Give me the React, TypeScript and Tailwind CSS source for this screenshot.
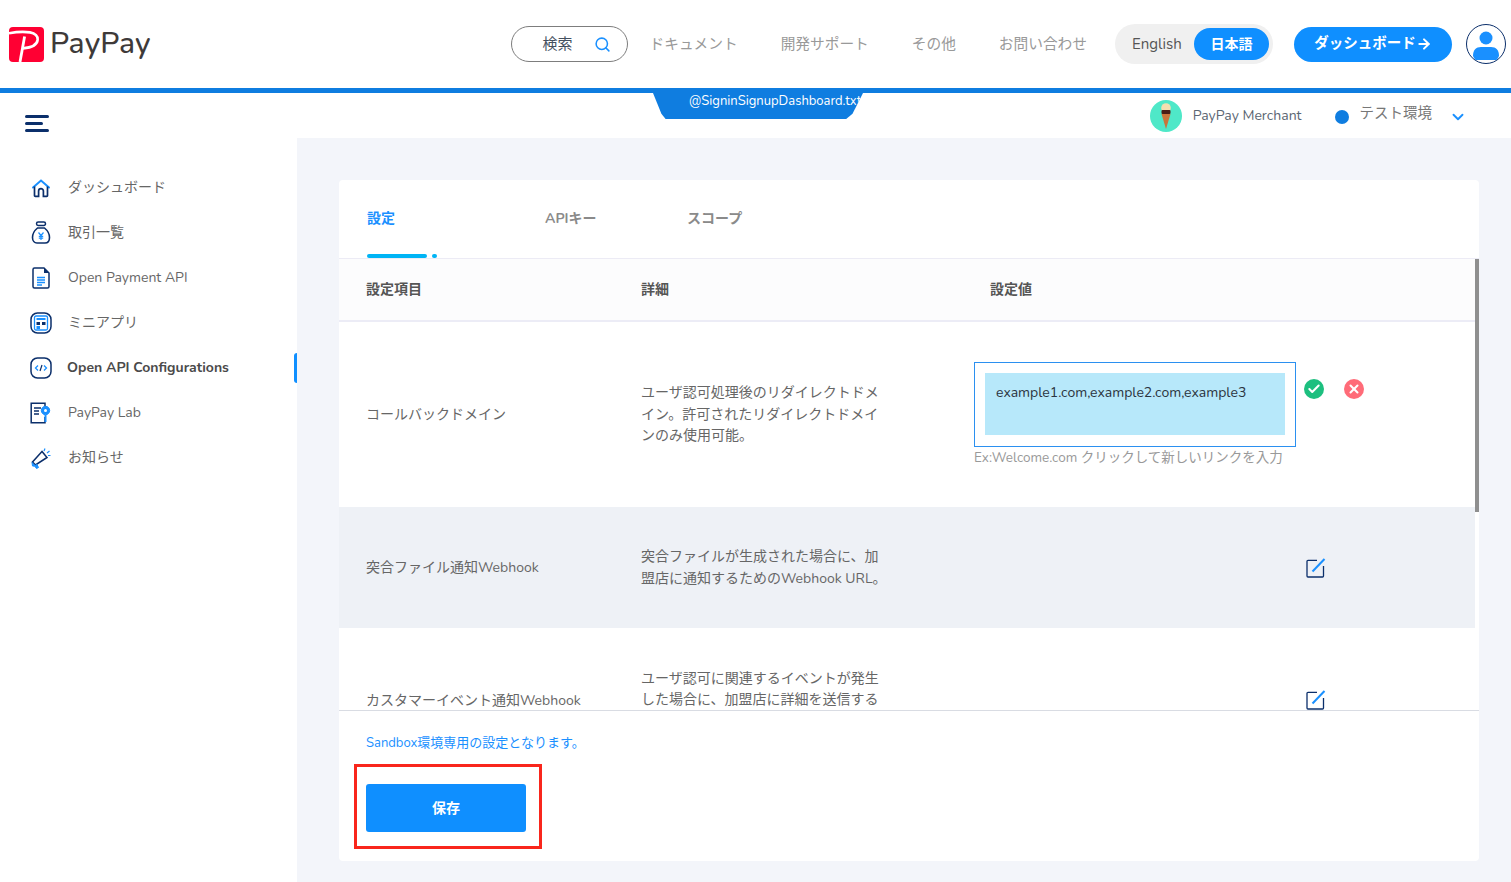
import { Search, ArrowRight, ChevronDown, Check, X } from "lucide-react";
import type { ReactNode } from "react";

const NAVY = "#0b2f6b";
const BLUE = "#1a90ff";

function Logo() {
  return (
    <svg width="35" height="35" viewBox="0 0 35 35">
      <rect width="35" height="35" rx="4" fill="#ff0033" />
      <path d="M0 6.2C9 4.6 16 4.6 21 5.4C26.5 6.3 29 9.5 28.6 13C28.2 17 24 20.4 14 21.4" fill="none" stroke="#fff" strokeWidth="2.6" />
      <path d="M15.6 9.4L11 35" fill="none" stroke="#fff" strokeWidth="2.8" />
    </svg>
  );
}

function HomeIcon() {
  return (
    <svg width="20" height="20" viewBox="0 0 20 20" fill="none">
      <path d="M2 9.5L10 2.5L18 9.5" stroke={BLUE} strokeWidth="2" strokeLinecap="round" />
      <path d="M3.5 8.5V17.5a.8.8 0 00.8.8H7.6V13a2.4 2.4 0 014.8 0v5.3h3.3a.8.8 0 00.8-.8V8.5" stroke={NAVY} strokeWidth="1.7" />
    </svg>
  );
}

function MoneyIcon() {
  return (
    <svg width="20" height="24" viewBox="0 0 20 24" fill="none">
      <rect x="5.5" y="1" width="9" height="3.4" rx="1.7" stroke={NAVY} strokeWidth="1.5" />
      <path d="M6.5 7h7c3 2.5 5 6 5 9.500 0 3.500-2 5.500-4.500 5.500h-8C3.500 22 1.500 20 1.500 16.500 1.500 13 3.500 9.500 6.500 7z" stroke={NAVY} strokeWidth="1.6" />
      <path d="M7.500 11.500L10 14.500L12.500 11.500M10 14.500V19M7.800 15.300H12.200M7.800 17.200H12.200" stroke={BLUE} strokeWidth="1.200" />
    </svg>
  );
}

function DocIcon() {
  return (
    <svg width="18" height="22" viewBox="0 0 18 22" fill="none">
      <path d="M12 1H2.500A1.500 1.500 0 001 2.500v17A1.500 1.500 0 002.500 21h13a1.500 1.500 0 001.500-1.500V6z" stroke={NAVY} strokeWidth="1.500" />
      <path d="M12 1v5h5" fill={NAVY} />
      <path d="M5 10.500h8M5 13h8M5 15.500h8M5 18h5" stroke={BLUE} strokeWidth="1.300" />
    </svg>
  );
}

function MiniAppIcon() {
  return (
    <svg width="22" height="22" viewBox="0 0 22 22" fill="none">
      <rect x="1" y="1" width="20" height="20" rx="6.500" stroke={NAVY} strokeWidth="1.500" />
      <rect x="4.500" y="4" width="13" height="14" rx="1.500" stroke={BLUE} strokeWidth="1.300" />
      <rect x="6.500" y="6" width="9" height="2" fill={BLUE} />
      <rect x="6.500" y="10" width="3.500" height="3" fill={NAVY} />
      <rect x="12" y="10" width="3.500" height="3" fill={NAVY} />
      <rect x="6.500" y="14" width="3.500" height="3" fill={BLUE} />
    </svg>
  );
}

function CodeIcon() {
  return (
    <svg width="22" height="22" viewBox="0 0 22 22" fill="none">
      <rect x="1" y="1" width="20" height="20" rx="6.500" stroke={NAVY} strokeWidth="1.500" />
      <path d="M8 8.500L5.500 11L8 13.500M14 8.500L16.500 11L14 13.500" stroke={BLUE} strokeWidth="1.300" />
      <path d="M12 8L10 14" stroke={NAVY} strokeWidth="1.200" />
    </svg>
  );
}

function LabIcon() {
  return (
    <svg width="22" height="22" viewBox="0 0 22 22" fill="none">
      <path d="M15 6V1.200H1.200V20.800H15V15" stroke={NAVY} strokeWidth="1.500" />
      <path d="M4 6h7M4 9h5M4 12h5" stroke={NAVY} strokeWidth="1.300" />
      <circle cx="15.500" cy="8.500" r="4.200" fill={BLUE} stroke={BLUE} />
      <circle cx="15.500" cy="8.500" r="1.500" fill="#fff" />
      <path d="M15.500 13v7" stroke={BLUE} strokeWidth="2" />
    </svg>
  );
}

function MegaphoneIcon() {
  return (
    <svg width="20" height="22" viewBox="0 0 20 22" fill="none">
      <path d="M11 4.500L1.500 15L4.500 18L16 10.500z" stroke={NAVY} strokeWidth="1.500" />
      <path d="M1 15.500L4 18.500L6 17.500L7.500 20.500L5.500 21.500L3.800 19.200L1.500 19z" fill={BLUE} stroke={BLUE} />
      <path d="M13 4L14 1.500M16 6L18.500 4M17 8.500L19.500 8.500" stroke={BLUE} strokeWidth="1.200" />
    </svg>
  );
}

function EditIcon() {
  return (
    <svg width="20" height="20" viewBox="0 0 20 20" fill="none" className="shrink-0">
      <path d="M11 2.300H2a1 1 0 00-1 1v14.700a1 1 0 001 1h14.500a1 1 0 001-1V8" stroke={NAVY} strokeWidth="1.300" />
      <path d="M6.500 13.500L18.500 1" stroke={BLUE} strokeWidth="2" />
    </svg>
  );
}

function ProfileIcon() {
  return (
    <div className="w-10 h-10 rounded-full border border-[#0b2f6b] flex items-center justify-center">
      <svg width="30" height="32" viewBox="0 0 30 32">
        <circle cx="15" cy="10" r="6.500" fill={BLUE} />
        <path d="M2 28c0-6 3-9 8-9h10c5 0 8 3 8 9a14 14 0 01-26 0z" fill={BLUE} />
      </svg>
    </div>
  );
}

function IceCream() {
  return (
    <div className="w-8 h-8 rounded-full bg-[#4fe8c8] flex items-center justify-center">
      <svg width="12" height="28" viewBox="0 0 12 28">
        <circle cx="6" cy="6" r="4.800" fill="#f5dfb0" />
        <rect x="1.500" y="8" width="9" height="4" rx="1" fill="#4a1d16" />
        <path d="M1.500 12h9L6 27z" fill="#c9743a" />
      </svg>
    </div>
  );
}

type NavItem = { icon: ReactNode; label: string; active?: boolean };

const navItems: NavItem[] = [
  { icon: <HomeIcon />, label: "ダッシュボード" },
  { icon: <MoneyIcon />, label: "取引一覧" },
  { icon: <DocIcon />, label: "Open Payment API" },
  { icon: <MiniAppIcon />, label: "ミニアプリ" },
  { icon: <CodeIcon />, label: "Open API Configurations", active: true },
  { icon: <LabIcon />, label: "PayPay Lab" },
  { icon: <MegaphoneIcon />, label: "お知らせ" },
];

function Header() {
  return (
    <header className="h-[88px] shrink-0 bg-white flex items-center pl-[9px] pr-[5px]">
      <div className="flex items-center gap-[6px]">
        <Logo />
        <span className="text-[30px] font-medium text-[#3e3a39] leading-none tracking-[0.2px]">PayPay</span>
      </div>
      <div className="ml-auto flex items-center">
        <div className="w-[117px] h-[36px] rounded-full border border-[#7d7d7d] flex items-center pl-[31px] text-[15px] text-[#44505f]">
          検索
          <Search size={17} color={BLUE} strokeWidth={2.2} className="ml-[21px]" />
        </div>
        <nav className="flex items-center gap-[43px] ml-[22px] text-[14.700px] text-[#999999]">
          <span>ドキュメント</span>
          <span>開発サポート</span>
          <span>その他</span>
          <span>お問い合わせ</span>
        </nav>
        <div className="ml-[28px] w-[158px] h-10 rounded-full bg-[#f0f0f0] flex items-center pl-[17px] pr-[4px] justify-between text-[15px] text-[#555555]">
          <span>English</span>
          <span className="w-[75px] h-8 rounded-full bg-[#0f8fff] text-white font-bold text-[14px] flex items-center justify-center">日本語</span>
        </div>
        <button className="ml-[21px] w-[158px] h-[35px] rounded-full bg-[#0f8fff] text-white font-bold text-[14.500px] flex items-center justify-center">
          ダッシュボード
          <ArrowRight size={16} strokeWidth={3} />
        </button>
        <div className="ml-[14px]">
          <ProfileIcon />
        </div>
      </div>
    </header>
  );
}

function Sidebar() {
  return (
    <aside className="w-[297px] shrink-0 bg-white">
      <div className="h-[72px] pl-[25px] pt-[22px]">
        <div className="w-6 flex flex-col gap-[4px]">
          <div className="h-[3px] w-6 rounded-full bg-[#0b2f6b]" />
          <div className="h-[3px] w-[18px] rounded-full bg-[#0b2f6b]" />
          <div className="h-[3px] w-6 rounded-full bg-[#0b2f6b]" />
        </div>
      </div>
      <ul>
        {navItems.map((item) => (
          <li key={item.label} className="relative h-[45px] flex items-center text-[14px] text-[#666666]">
            <span className="w-[28px] ml-[27px] flex justify-center">{item.icon}</span>
            <span className={item.active ? "ml-[12px] font-bold text-[#4a4a4a]" : "ml-[13px]"}>{item.label}</span>
            {item.active && <div className="absolute right-0 top-[8px] w-[3px] h-[30px] rounded-l-sm bg-[#0f8fff]" />}
          </li>
        ))}
      </ul>
    </aside>
  );
}

function SettingsTable() {
  return (
    <div className="relative h-[451px] overflow-hidden">
      <div className="h-[63px] bg-[#fcfcfd] border-b-2 border-[#ececf6] flex items-center pl-[27px] text-[14px] font-bold text-[#555555]">
        <span className="w-[275px]">設定項目</span>
        <span className="w-[349px]">詳細</span>
        <span>設定値</span>
      </div>

      <div className="mr-[4px] text-[14px] text-[#666666]">
        <div className="h-[185px] flex items-center pl-[27px]">
          <span className="w-[275px]">コールバックドメイン</span>
          <p className="w-[333px] leading-[21.500px]">
            ユーザ認可処理後のリダイレクトドメ<br />
            イン。許可されたリダイレクトドメイ<br />
            ンのみ使用可能。
          </p>
          <div className="mt-[1px]">
            <div className="flex items-start">
              <div className="w-[322px] h-[85px] border border-[#2b90f0] p-[10px]">
                <div className="h-[62px] bg-[#b7e8fa] px-[11px] pt-[10px] text-[14px] leading-[20px] text-[#2b3440]">
                  example1.com,example2.com,example3
                </div>
              </div>
              <div className="ml-[8px] mt-[17px] w-5 h-5 rounded-full bg-[#1dbf7f] flex items-center justify-center">
                <Check size={14} color="#fff" strokeWidth={3.500} />
              </div>
              <div className="ml-[20px] mt-[17px] w-5 h-5 rounded-full bg-[#ff6b78] flex items-center justify-center">
                <X size={14} color="#fff" strokeWidth={3.500} />
              </div>
            </div>
            <div className="mt-[1px] text-[13.500px] leading-[20px] text-[#999999]">Ex:Welcome.com クリックして新しいリンクを入力</div>
          </div>
        </div>

        <div className="h-[121px] bg-[#eef1f6] flex items-center pl-[27px]">
          <span className="w-[275px]">突合ファイル通知Webhook</span>
          <p className="w-[333px] leading-[21.500px]">
            突合ファイルが生成された場合に、加<br />
            盟店に通知するためのWebhook URL。
          </p>
          <div className="w-[352px] flex justify-end">
            <EditIcon />
          </div>
        </div>

        <div className="h-[144px] flex items-center pl-[27px]">
          <span className="w-[275px]">カスタマーイベント通知Webhook</span>
          <p className="w-[333px] leading-[21.500px]">
            ユーザ認可に関連するイベントが発生<br />
            した場合に、加盟店に詳細を送信する<br />
            ためのWebhook URL。
          </p>
          <div className="w-[352px] flex justify-end">
            <EditIcon />
          </div>
        </div>
      </div>

      <div className="absolute right-0 top-0 w-[4px] h-[253px] bg-[#8f8f8f]" />
    </div>
  );
}

function SettingsCard() {
  return (
    <section className="bg-white rounded-[4px] h-[681px] flex flex-col">
      <div className="h-[79px] border-b border-[#ecebf5] flex pl-[28px] pt-[28px] text-[14px] font-bold text-[#8a8a8a] relative">
        <span className="w-[178px] text-[#1a90ff]">設定</span>
        <span className="w-[142px]">APIキー</span>
        <span>スコープ</span>
        <div className="absolute left-[28px] bottom-0 flex gap-[5px]">
          <div className="w-[60px] h-[4px] rounded-full bg-[#00b4f5]" />
          <div className="w-[5px] h-[4px] rounded-full bg-[#00b4f5]" />
        </div>
      </div>

      <SettingsTable />

      <div className="border-t border-[#d9dce3] pl-[27px] pt-[23px]">
        <p className="text-[13px] leading-[18px] text-[#1a90ff]">Sandbox環境専用の設定となります。</p>
        <div className="relative w-[160px] mt-[32px]">
          <button className="w-[160px] h-[48px] rounded-[3px] bg-[#0f8fff] text-white text-[14px] font-bold">保存</button>
          <div className="absolute -left-[12px] -top-[20px] w-[188px] h-[85px] border-[3px] border-[#f9261c]" />
        </div>
      </div>
    </section>
  );
}

export default function App() {
  return (
    <div className="relative w-[1511px] h-[882px] overflow-hidden flex flex-col bg-[#f3f5fa] font-['Nunito','Lato','Noto_Sans_CJK_JP',sans-serif]">
      <Header />
      <div className="h-[5px] shrink-0 bg-[#0f7de0]" />
      <div className="flex flex-1 min-h-0">
        <Sidebar />
        <main className="flex-1 flex flex-col">
          <div className="h-[45px] shrink-0 bg-white flex items-center justify-end pr-[44px] text-[14px] text-[#5b6673]">
            <IceCream />
            <span className="ml-[11px]">PayPay Merchant</span>
            <span className="ml-[33px] w-[14px] h-[14px] rounded-full bg-[#0f7de0] mt-[3px]" />
            <span className="ml-[11px] text-[14.500px] text-[#777777] -mt-[3px]">テスト環境</span>
            <ChevronDown size={18} color={BLUE} strokeWidth={2.500} className="ml-[17px] mt-[3px]" />
          </div>
          <div className="pl-[42px] pr-[32px] pt-[42px]">
            <SettingsCard />
          </div>
        </main>
      </div>
      {/* environment tab hanging from the header bar */}
      <div className="absolute left-[653px] top-[93px] w-[210px] h-[26px] bg-[#0f7de0] [clip-path:polygon(0_0,100%_0,95%_80%,92%_100%,6%_100%,4%_80%)] text-white text-[13px] leading-[16px] pl-[36px]">
        @SigninSignupDashboard.txt
      </div>
    </div>
  );
}
